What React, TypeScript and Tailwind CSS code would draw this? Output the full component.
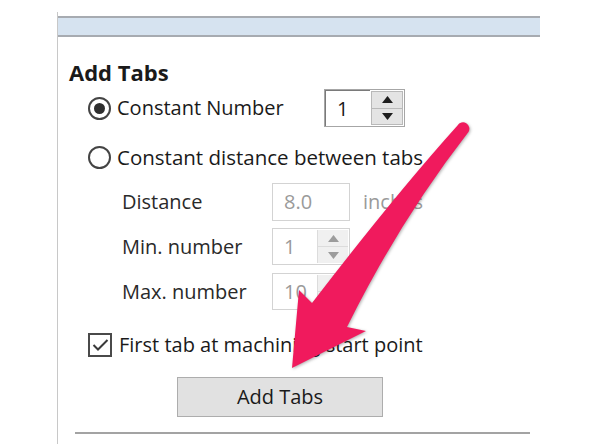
import React from "react";

function Triangle({ up, color }: { up: boolean; color: string }) {
  return (
    <svg width="11" height="7" viewBox="0 0 11 7">
      {up ? <path d="M0 7 L5.5 0 L11 7 Z" fill={color} /> : <path d="M0 0 L11 0 L5.5 7 Z" fill={color} />}
    </svg>
  );
}

function Spinner({
  value,
  disabled,
}: {
  value: string;
  disabled?: boolean;
}) {
  if (disabled) {
    return (
      <div className="flex h-[37px] w-[78px] border border-[#d3d3d3] bg-white">
        <div className="flex flex-1 items-center pl-[11px] text-[20px] text-[#9a9a9a]">{value}</div>
        <div className="m-[1px] flex w-[31px] flex-col border-l border-[#dcdcdc] bg-[#f0f0f0]">
          <div className="flex flex-1 items-center justify-center border-b border-[#dcdcdc]">
            <Triangle up color="#9c9c9c" />
          </div>
          <div className="flex flex-1 items-center justify-center">
            <Triangle up={false} color="#9c9c9c" />
          </div>
        </div>
      </div>
    );
  }
  return (
    <div className="flex h-[38px] w-[81px] border border-[#a6a6a6] bg-white">
      <div className="flex flex-1 items-center border-t border-l border-[#7a7a7a] pl-[11px] text-[20px] text-[#1a1a1a]">
        {value}
      </div>
      <div className="m-[1px] flex w-[32px] flex-col border border-[#b9b9b9] bg-[#e4e4e4]">
        <div className="flex flex-1 items-center justify-center border-b border-[#b9b9b9]">
          <Triangle up color="#1e1e1e" />
        </div>
        <div className="flex flex-1 items-center justify-center">
          <Triangle up={false} color="#1e1e1e" />
        </div>
      </div>
    </div>
  );
}

function Radio({ checked }: { checked?: boolean }) {
  return (
    <div className="flex h-[23px] w-[23px] shrink-0 items-center justify-center rounded-full border-2 border-[#444]">
      {checked && <div className="h-[11px] w-[11px] rounded-full bg-[#2e2e2e]" />}
    </div>
  );
}

function Checkbox() {
  return (
    <div className="flex h-[24px] w-[24px] shrink-0 items-center justify-center border-2 border-[#4a4a4a] bg-white">
      <svg width="17" height="14" viewBox="0 0 17 14">
        <path d="M1.5 7 L6 11.5 L15.5 2" fill="none" stroke="#3a3a3a" strokeWidth="2" />
      </svg>
    </div>
  );
}

export default function App() {
  return (
    <div className="relative h-[444px] w-[592px] overflow-hidden bg-white font-['Open_Sans','Noto_Sans',sans-serif] text-[#1a1a1a]">
      <div className="ml-[57px] mt-[12px] flex h-[432px] w-[483px] flex-col border-l border-[#c8c8c8]">
        {/* panel header strip */}
        <div className="mt-[4px] h-[21px] border-y-2 border-[#a7abb1] bg-[#d6e3f0]" />

        {/* section title */}
        <div className="mt-[21px] flex h-[28px] items-center pl-[11px] text-[22px] font-bold">Add Tabs</div>

        {/* constant number */}
        <div className="mt-[3px] flex h-[38px] items-center pl-[30px]">
          <div className="flex w-[236px] items-center gap-[6px]">
            <Radio checked />
            <span className="text-[20px]">Constant Number</span>
          </div>
          <Spinner value="1" />
        </div>

        {/* constant distance */}
        <div className="mt-[13px] flex h-[34px] items-center gap-[6px] pl-[30px]">
          <Radio />
          <span className="text-[20.5px]">Constant distance between tabs</span>
        </div>

        <div className="mt-[9px] flex h-[38px] items-center pl-[64px]">
          <span className="w-[150px] text-[20px] text-[#2a2a2a]">Distance</span>
          <div className="flex h-[38px] w-[78px] items-center border border-[#d3d3d3] pl-[11px] text-[20px] text-[#9a9a9a]">
            8.0
          </div>
          <span className="ml-[13px] text-[20px] text-[#9a9a9a]">inches</span>
        </div>

        <div className="mt-[7px] flex h-[37px] items-center pl-[64px]">
          <span className="w-[150px] text-[20px] text-[#2a2a2a]">Min. number</span>
          <Spinner value="1" disabled />
        </div>

        <div className="mt-[8px] flex h-[37px] items-center pl-[64px]">
          <span className="w-[150px] text-[20px] text-[#2a2a2a]">Max. number</span>
          <Spinner value="10" disabled />
        </div>

        {/* first tab option */}
        <div className="mt-[20px] flex h-[30px] items-center gap-[7px] pl-[30px]">
          <Checkbox />
          <span className="text-[20px]">First tab at machining start point</span>
        </div>

        <div className="mt-[17px] pl-[119px]">
          <button className="flex h-[40px] w-[206px] items-center justify-center border border-[#adadad] bg-[#e1e1e1] text-[20px] text-[#1a1a1a]">
            Add Tabs
          </button>
        </div>

        <div className="ml-[17px] mt-[15px] h-[2px] w-[455px] bg-[#a3a3a3]" />
      </div>

      {/* callout arrow: tapered, slightly bowed shaft with a wide head */}
      <svg
        className="pointer-events-none absolute left-0 top-0 drop-shadow-[1px_1px_1.5px_rgba(0,0,0,0.3)]"
        width="592"
        height="444"
        viewBox="0 0 592 444"
      >
        <path
          d="M457.5 125.5 A5.5 5.5 0 0 1 468.5 132 Q400 220 347 327 L366 331 L292 368 L299 290 L312 303 Q395 195 457.5 125.5 Z"
          fill="#f01a5d"
        />
      </svg>
    </div>
  );
}
